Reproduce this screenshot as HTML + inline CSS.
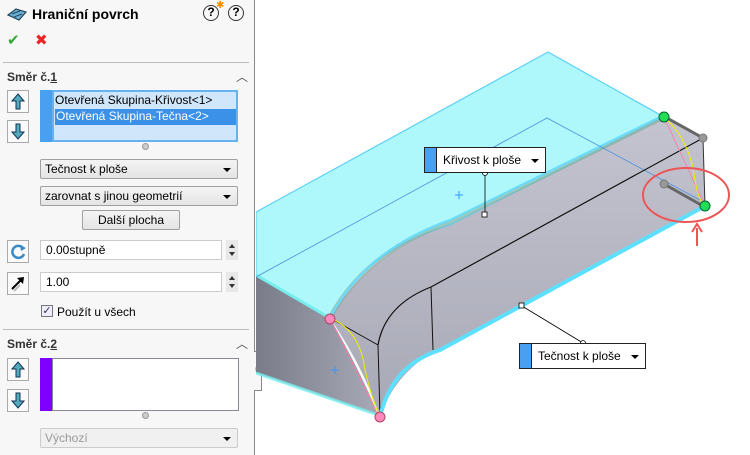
<!DOCTYPE html>
<html><head><meta charset="utf-8"><style>
*{margin:0;padding:0;box-sizing:border-box}
body{width:750px;height:455px;overflow:hidden;background:#fff;font-family:"Liberation Sans","DejaVu Sans",sans-serif;font-size:12px;color:#000;position:relative}
#panel{position:absolute;left:0;top:0;width:255px;height:455px;background:#f7f7f7;border-right:1px solid #888}
.a{position:absolute}
.btn{position:absolute;width:22px;height:23px;border:1px solid #aaa;background:#fafafa}
.dd{position:absolute;height:20px;border:1px solid #a0a0a0;border-radius:2px;background:linear-gradient(#f4f4f4,#e4e4e4);padding:2px 4px;font-size:12px}
.dd:after{content:"";position:absolute;right:6px;top:8px;border-left:4px solid transparent;border-right:4px solid transparent;border-top:4px solid #000}
.dd.nb:after{display:none}
.inp{position:absolute;height:20px;border:1px solid #ccc;background:#fff;padding:2px 5px}
.spin{position:absolute;width:12px;height:20px;background:#e8e8e8}
.lbl{position:absolute;height:26px;border:1px solid #222;background:#fff;font-size:12px}
.lbl .c{position:absolute;left:0;top:0;width:12px;height:24px;background:#4aa0f0;border-right:1px solid #222}
.tri{position:absolute;width:0;height:0;border-left:4px solid transparent;border-right:4px solid transparent;border-top:4px solid #000}
</style></head><body>
<div id="panel">
  <svg class="a" style="left:6px;top:6px" width="22" height="18"><path d="M2 9 L10 3 L20 6 L13 14 Z" fill="#6ab0d8" stroke="#245" stroke-width="1.2"/><path d="M6 8 L14 5 M8 11 L16 8" stroke="#245" stroke-width="1"/></svg>
  <div class="a" style="left:32px;top:6px;font-weight:bold;font-size:14px">Hraniční povrch</div>
  <div class="a" style="left:203px;top:5px;width:16px;height:16px;border:1.5px solid #333;border-radius:50%;text-align:center;font-weight:bold;font-size:12px;line-height:13px">?</div>
  <div class="a" style="left:216px;top:0px;color:#f80;font-size:10px">✱</div>
  <div class="a" style="left:228px;top:5px;width:16px;height:16px;border:1.5px solid #333;border-radius:50%;text-align:center;font-weight:bold;font-size:12px;line-height:13px">?</div>
  <div class="a" style="left:7px;top:31px;color:#3a3;font-size:15px;font-weight:bold">✔</div>
  <div class="a" style="left:35px;top:31px;color:#e22;font-size:15px;font-weight:bold">✖</div>
  <div class="a" style="left:3px;top:62px;width:246px;border-top:1px solid #bbb"></div>
  <div class="a" style="left:7px;top:70px;font-weight:bold;color:#333">Směr č.<u>1</u></div>
  <div class="a" style="left:236px;top:68px;font-size:12px;color:#555">︿</div>
  <div class="btn" style="left:7px;top:90px"><svg width="20" height="21"><path d="M10 3 L16 10 L12 10 L12 18 L8 18 L8 10 L4 10 Z" fill="#5ab" stroke="#135"/></svg></div>
  <div class="btn" style="left:7px;top:120px"><svg width="20" height="21"><path d="M10 18 L16 11 L12 11 L12 3 L8 3 L8 11 L4 11 Z" fill="#5ab" stroke="#135"/></svg></div>
  <div class="a" style="left:40px;top:90px;width:12px;height:52px;background:#4aa0f0"></div>
  <div class="a" style="left:52px;top:90px;width:186px;height:52px;background:#cfe6fb;border:2px solid #66b2f0"></div>
  <div class="a" style="left:55px;top:93px;font-size:12px">Otevřená Skupina-Křivost&lt;1&gt;</div>
  <div class="a" style="left:55px;top:109px;width:181px;height:16px;background:#3b90e8;color:#fff;padding-left:1px;font-size:12px">Otevřená Skupina-Tečna&lt;2&gt;</div>
  <div class="a" style="left:142px;top:143px;width:7px;height:7px;border-radius:50%;background:#ccc;border:1px solid #999"></div>
  <div class="dd" style="left:40px;top:159px;width:198px">Tečnost k ploše</div>
  <div class="dd" style="left:40px;top:186px;width:198px">zarovnat s jinou geometrií</div>
  <div class="dd nb" style="left:82px;top:210px;width:98px;text-align:center;font-size:12px;padding-top:2px">Další plocha</div>
  <div class="btn" style="left:7px;top:240px"><svg width="20" height="21"><path d="M15 7 A6 6 0 1 0 16 13" fill="none" stroke="#3a8ac8" stroke-width="2.5"/><path d="M12 4 L18 7 L13 10Z" fill="#3a8ac8"/></svg></div>
  <div class="inp" style="left:40px;top:240px;width:182px">0.00stupně</div>
  <div class="spin" style="left:226px;top:240px"><svg width="12" height="20"><path d="M3 8 L6 4 L9 8Z M3 12 L6 16 L9 12Z" fill="#333"/></svg></div>
  <div class="btn" style="left:7px;top:272px"><svg width="20" height="21"><path d="M4 16 L14 6" stroke="#000" stroke-width="2"/><path d="M9 5 L16 4 L15 11Z" fill="#000"/><path d="M12 12 L6 18" stroke="#bbb" stroke-width="2"/></svg></div>
  <div class="inp" style="left:40px;top:272px;width:182px">1.00</div>
  <div class="spin" style="left:226px;top:272px"><svg width="12" height="20"><path d="M3 8 L6 4 L9 8Z M3 12 L6 16 L9 12Z" fill="#333"/></svg></div>
  <div class="a" style="left:41px;top:305px;width:12px;height:12px;border:1px solid #777;background:#eef;font-size:11px;line-height:10px;text-align:center;color:#335">✓</div>
  <div class="a" style="left:57px;top:305px">Použít u všech</div>
  <div class="a" style="left:3px;top:329px;width:246px;border-top:1px solid #bbb"></div>
  <div class="a" style="left:7px;top:337px;font-weight:bold;color:#333">Směr č.<u>2</u></div>
  <div class="a" style="left:236px;top:335px;font-size:12px;color:#555">︿</div>
  <div class="btn" style="left:7px;top:358px"><svg width="20" height="21"><path d="M10 3 L16 10 L12 10 L12 18 L8 18 L8 10 L4 10 Z" fill="#5ab" stroke="#135"/></svg></div>
  <div class="btn" style="left:7px;top:389px"><svg width="20" height="21"><path d="M10 18 L16 11 L12 11 L12 3 L8 3 L8 11 L4 11 Z" fill="#5ab" stroke="#135"/></svg></div>
  <div class="a" style="left:40px;top:358px;width:12px;height:53px;background:#8000ff"></div>
  <div class="a" style="left:52px;top:358px;width:187px;height:53px;background:#fff;border:1px solid #889"></div>
  <div class="a" style="left:142px;top:412px;width:7px;height:7px;border-radius:50%;background:#ccc;border:1px solid #999"></div>
  <div class="dd" style="left:40px;top:428px;width:198px;color:#999;background:#f0f0f0;border-color:#ccc">Výchozí</div>
</div>
<div class="a" style="left:254px;top:351px;width:8px;height:40px;background:#f7f7f7;border:1px solid #888;border-left:none"></div>
<div class="a" style="left:255px;top:366px;width:6px;height:6px;border-radius:50%;background:#bbb"></div>
<svg class="a" style="left:256px;top:0" width="494" height="455" viewBox="256 0 494 455">
  <defs>
    <linearGradient id="fg" x1="0" y1="0" x2="0" y2="1"><stop offset="0" stop-color="#c4c4d0"/><stop offset="1" stop-color="#a8a9b6"/></linearGradient>
    <linearGradient id="lg" x1="0" y1="0" x2="1" y2="0"><stop offset="0" stop-color="#7a7b88"/><stop offset="1" stop-color="#a8a9b6"/></linearGradient>
  </defs>
  <path d="M256 275 L330 318 Q365 380 378 415 L256 373 Z" fill="url(#lg)"/>
  <path d="M330 318 Q370 250 450 225 L664 117 L703 138 L705 206 L440 348 Q395 372 380 417 Q365 370 330 318 Z" fill="url(#fg)"/>
  <path d="M548 52 L664 117 L450 225 Q365 250 330 318 L256 275 L256 212 Z" fill="#aef8fc" stroke="#5cd0f5" stroke-width="1.2"/>
  <path d="M256 275 L330 318" stroke="#7ee" stroke-width="3"/>
  <path d="M256 373 L378 415" stroke="#7ee" stroke-width="3" opacity=".8"/>
  <path d="M330 318 Q365 252 450 222 L664 117" fill="none" stroke="#8a9" stroke-width="5" opacity=".6"/>
  <path d="M330 318 Q365 250 450 220 L664 115" fill="none" stroke="#6df" stroke-width="2"/>
  <path d="M256 277 L547 118 L700 200" fill="none" stroke="#4a90e0" stroke-width="0.8"/>
  <path d="M378 345 Q385 305 431 287 L703 138" fill="none" stroke="#111" stroke-width="1.2"/>
  <path d="M330 318 L378 345 L380 415" fill="none" stroke="#111" stroke-width="1"/>
  <path d="M431 287 L433 350" stroke="#111" stroke-width="1"/>
  <path d="M664 117 L703 138 L705 206" fill="none" stroke="#333" stroke-width="1"/>
  <path d="M380 417 Q392 365 440 350 L705 206" fill="none" stroke="#5de0ff" stroke-width="4"/>
  <path d="M330 318 L378 415" stroke="#f7a" stroke-width="0.8"/>
  <path d="M330 318 Q360 330 365 370 Q372 400 380 417" fill="none" stroke="#ee0" stroke-width="1"/>
  <path d="M664 117 L705 206" stroke="#f7a" stroke-width="0.8"/>
  <path d="M664 117 Q690 140 695 180 Q698 200 705 206" fill="none" stroke="#ee0" stroke-width="1"/>
  <path d="M667 118 L703 138" stroke="#666" stroke-width="3"/>
  <path d="M703 206 L664 184" stroke="#666" stroke-width="3"/>
  <circle cx="703" cy="138" r="4" fill="#999" stroke="#777"/>
  <circle cx="664" cy="184" r="4" fill="#999" stroke="#777"/>
  <circle cx="664" cy="117" r="5" fill="#2d5" stroke="#063"/>
  <circle cx="705" cy="206" r="5" fill="#2d5" stroke="#063"/>
  <circle cx="330" cy="319" r="5" fill="#f8b" stroke="#a46"/>
  <circle cx="380" cy="417" r="5" fill="#f8b" stroke="#a46"/>
  <path d="M455 195 h8 M459 191 v8 M331 370 h8 M335 366 v8" stroke="#39f" stroke-width="1"/>
  <ellipse cx="686" cy="195" rx="43" ry="27" fill="none" stroke="#e55" stroke-width="2"/>
  <path d="M697 246 L697 228" stroke="#e55" stroke-width="2"/>
  <path d="M692 232 L697 224 L702 232" fill="none" stroke="#e55" stroke-width="2"/>
  <path d="M485 173 L485 214" stroke="#000" stroke-width="0.8"/>
  <circle cx="485" cy="173" r="2.5" fill="#fff" stroke="#000" stroke-width=".8"/>
  <rect x="482" y="212" width="5" height="5" fill="#fff" stroke="#000" stroke-width=".8"/>
  <path d="M522 306 L583 343" stroke="#000" stroke-width="0.8"/>
  <rect x="519" y="303" width="5" height="5" fill="#fff" stroke="#000" stroke-width=".8"/>
  <circle cx="583" cy="343" r="2.5" fill="#fff" stroke="#000" stroke-width=".8"/>
</svg>
<div class="lbl" style="left:424px;top:147px;width:122px"><div class="c"></div><span class="a" style="left:18px;top:5px">Křivost k ploše</span><div class="tri" style="left:106px;top:11px"></div></div>
<div class="lbl" style="left:519px;top:343px;width:127px"><div class="c"></div><span class="a" style="left:18px;top:5px">Tečnost k ploše</span><div class="tri" style="left:111px;top:11px"></div></div>
</body></html>
